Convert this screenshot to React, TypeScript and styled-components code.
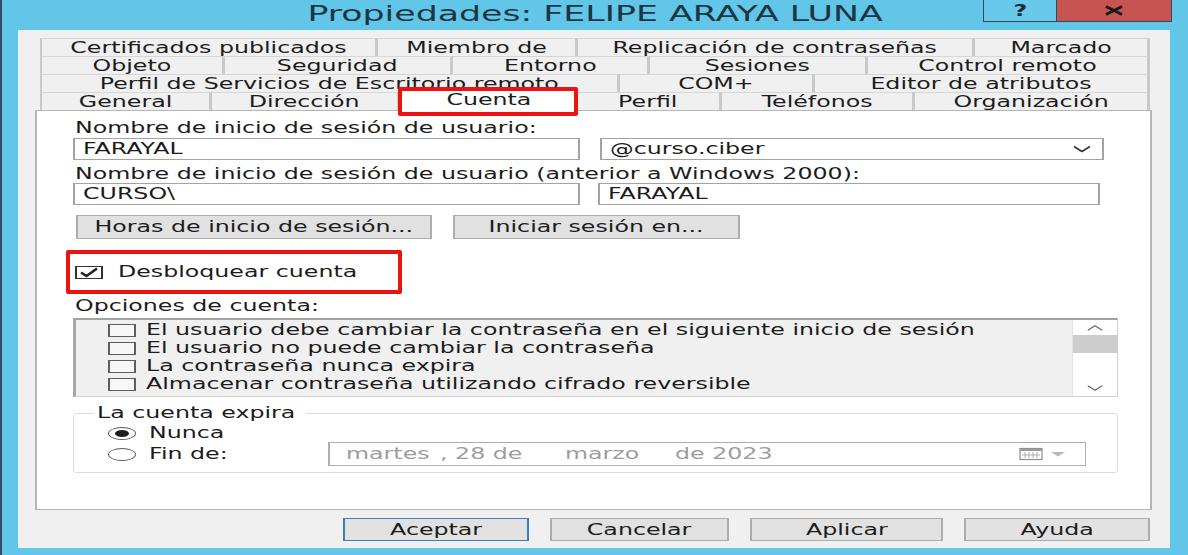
import React from 'react';
import styled, { createGlobalStyle, css } from 'styled-components';

const Global = createGlobalStyle`
  html, body { margin: 0; padding: 0; background: #62c6e9; }
  body {
    font-family: "DejaVu Sans", "Noto Sans", sans-serif;
    font-size: 15px;
    color: #1c1c1c;
  }
  * { box-sizing: border-box; }
`;

const Wide = styled.span<{ $origin?: 'left' | 'center' }>`
  display: inline-block;
  white-space: nowrap;
  transform: scaleX(1.58);
  transform-origin: ${(p) => (p.$origin === 'center' ? 'center' : 'left')} center;
`;

const Frame = styled.div`
  width: 1188px;
  height: 555px;
  background: #62c6e9;
  border-left: 2px solid #2f4d5b;
  display: flex;
  flex-direction: column;
  overflow: hidden;
`;

const TitleBar = styled.div`
  height: 30px;
  flex: none;
  display: grid;
  grid-template-columns: 1fr auto 1fr;
  align-items: start;
`;

const Title = styled.div`
  grid-column: 2;
  font-size: 22px;
  line-height: 28px;
  color: #1c3542;
`;

const Controls = styled.div`
  grid-column: 3;
  justify-self: end;
  display: flex;
  margin-right: 16px;
`;

const CtrlButton = styled.div<{ $close?: boolean }>`
  width: ${(p) => (p.$close ? 115 : 74)}px;
  height: 22px;
  background: ${(p) => (p.$close ? '#c75450' : '#68c9ea')};
  border: 1px solid #2e4a58;
  border-top: none;
  ${(p) => p.$close && 'border-left: none;'}
  display: flex;
  align-items: center;
  justify-content: center;
  font-weight: bold;
  font-size: 15px;
  color: #1b2b33;
`;

const Body = styled.div`
  flex: 1;
  margin: 0 18px 7px 16px;
  background: #f0f0f0;
  padding: 8px 18px 7px 17px;
  display: flex;
  flex-direction: column;
`;

const TabStrip = styled.div`
  display: flex;
  flex-direction: column;
  margin: 0 2px 0 5px;
  position: relative;
  z-index: 1;
`;

const TabRow = styled.div`
  display: flex;
  height: 18px;
  align-items: flex-start;
`;

const Tab = styled.div<{ $w: number; $active?: boolean }>`
  position: relative;
  width: ${(p) => p.$w}px;
  flex: none;
  height: 18px;
  background: #f0f0f0;
  border-top: 1px solid #d6d6d6;
  border-right: 3px solid #c9c9c9;
  &:first-child {
    border-left: 2px solid #c9c9c9;
  }
  display: flex;
  align-items: center;
  justify-content: center;
  line-height: 16px;
  ${(p) =>
    p.$active &&
    css`
      height: 23px;
      margin-top: -4px;
      background: #ffffff;
      border: 1px solid #d0d0d0;
      border-bottom: none;
      z-index: 3;
      &::after {
        content: '';
        position: absolute;
        left: -3px;
        right: -2px;
        top: -2px;
        bottom: -5px;
        border: 4px solid #ee1111;
        border-radius: 2px;
        pointer-events: none;
      }
    `}
`;

const Panel = styled.div`
  height: 400px;
  flex: none;
  background: #ffffff;
  border: 1px solid #b5b5b5;
  border-left-width: 2px;
  border-right-width: 2px;
  padding: 9px 32px 0 36px;
  display: flex;
  flex-direction: column;
`;

const Label = styled.div<{ $mt?: number }>`
  height: 16px;
  line-height: 16px;
  margin-top: ${(p) => p.$mt ?? 0}px;
  margin-left: 2px;
`;

const FieldRow = styled.div<{ $cols: string; $gap: number; $mt: number }>`
  display: grid;
  grid-template-columns: ${(p) => p.$cols};
  column-gap: ${(p) => p.$gap}px;
  margin-top: ${(p) => p.$mt}px;
`;

const TextBox = styled.div`
  height: 22px;
  background: #ffffff;
  border: 1px solid #a3a3a3;
  border-left-width: 2px;
  border-right-width: 2px;
  display: flex;
  align-items: center;
  justify-content: space-between;
  padding: 0 10px 0 8px;
  line-height: 16px;
`;

const ButtonRow = styled.div<{ $mt: number; $end?: boolean }>`
  display: flex;
  gap: 21px;
  margin-top: ${(p) => p.$mt}px;
  justify-content: ${(p) => (p.$end ? 'flex-end' : 'flex-start')};
  ${(p) => (p.$end ? 'margin-right: 2px;' : 'margin-left: 3px;')}
`;

const Button = styled.div<{ $w: number; $default?: boolean; $h?: number }>`
  width: ${(p) => p.$w}px;
  height: ${(p) => p.$h ?? 24}px;
  background: #e1e1e1;
  border: 1px solid ${(p) => (p.$default ? '#3c7fc1' : '#adadad')};
  border-left-width: 2px;
  border-right-width: 2px;
  display: flex;
  align-items: center;
  justify-content: center;
  line-height: 16px;
`;

const CheckRow = styled.div`
  width: 336px;
  height: 44px;
  margin: 11px 0 0 -7px;
  border: 4px solid #ee1111;
  border-radius: 2px;
  display: flex;
  align-items: center;
  gap: 15px;
  padding-left: 5px;
`;

const CheckBox = styled.div<{ $dark?: boolean }>`
  width: 28px;
  height: 13px;
  flex: none;
  background: ${(p) => (p.$dark ? '#ffffff' : '#f7f7f7')};
  border: 1px solid ${(p) => (p.$dark ? '#333333' : '#5e5e5e')};
  border-left-width: 2px;
  border-right-width: 2px;
  display: flex;
  align-items: center;
  justify-content: center;
`;

const ListBox = styled.div`
  height: 79px;
  margin-top: 4px;
  background: #f0f0f0;
  display: flex;
  border: 1px solid #d0d0d0;
  border-top: 2px solid #a2a2a2;
  border-left: 3px solid #a8a8a8;
`;

const Items = styled.div`
  flex: 1;
  padding: 1px 0 0 32px;
  display: flex;
  flex-direction: column;
`;

const Item = styled.div`
  height: 18px;
  display: flex;
  align-items: center;
  gap: 10px;
  line-height: 16px;
`;

const ScrollBar = styled.div`
  width: 45px;
  flex: none;
  background: #ffffff;
  border-left: 1px solid #e2e2e2;
  display: flex;
  flex-direction: column;
`;

const ScrollArrow = styled.div<{ $h: number }>`
  height: ${(p) => p.$h}px;
  display: flex;
  align-items: center;
  justify-content: center;
`;

const ScrollThumb = styled.div`
  height: 18px;
  background: #cdcdcd;
`;

const ScrollTrack = styled.div`
  flex: 1;
`;

const Group = styled.fieldset`
  margin: 8px 0 0 0;
  padding: 0 31px 6px 20px;
  border: 1px solid #dcdcdc;
  border-radius: 3px;
  min-width: 0;
`;

const Legend = styled.legend`
  width: 212px;
  padding: 0 3px;
  line-height: 16px;
  height: 16px;
`;

const RadioRow = styled.div<{ $h: number; $mt?: number }>`
  height: ${(p) => p.$h}px;
  margin: ${(p) => p.$mt ?? 0}px 0 0 14px;
  display: flex;
  align-items: center;
  line-height: 16px;
`;

const RadioLead = styled.div<{ $w?: number }>`
  display: flex;
  align-items: center;
  gap: 13px;
  ${(p) => (p.$w ? `width: ${p.$w}px; flex: none;` : '')}
`;

const Radio = styled.div<{ $on?: boolean }>`
  width: 28px;
  height: 13px;
  flex: none;
  border-radius: 50%;
  border: 1.5px solid #5a5a5a;
  background: #ffffff;
  display: flex;
  align-items: center;
  justify-content: center;
  &::after {
    content: '';
    display: ${(p) => (p.$on ? 'block' : 'none')};
    width: 14px;
    height: 7px;
    border-radius: 50%;
    background: #1e1e1e;
  }
`;

const DateBox = styled.div`
  width: 758px;
  height: 24px;
  background: #ffffff;
  border: 1px solid #adadad;
  border-left-width: 2px;
  display: flex;
  align-items: center;
  padding: 0 18px 0 16px;
  color: #9d9d9d;
  line-height: 16px;
`;

const DateSeg = styled.div<{ $w: number }>`
  width: ${(p) => p.$w}px;
  flex: none;
`;

const DateIcons = styled.div`
  margin-left: auto;
  display: flex;
  align-items: center;
  gap: 4px;
`;

const tabRows: { label: string; w: number; active?: boolean }[][] = [
  [
    { label: 'Certificados publicados', w: 338 },
    { label: 'Miembro de', w: 200 },
    { label: 'Replicación de contraseñas', w: 397 },
    { label: 'Marcado', w: 175 },
  ],
  [
    { label: 'Objeto', w: 185 },
    { label: 'Seguridad', w: 228 },
    { label: 'Entorno', w: 197 },
    { label: 'Sesiones', w: 218 },
    { label: 'Control remoto', w: 282 },
  ],
  [
    { label: 'Perfil de Servicios de Escritorio remoto', w: 580 },
    { label: 'COM+', w: 195 },
    { label: 'Editor de atributos', w: 335 },
  ],
  [
    { label: 'General', w: 172 },
    { label: 'Dirección', w: 188 },
    { label: 'Cuenta', w: 177, active: true },
    { label: 'Perfil', w: 145 },
    { label: 'Teléfonos', w: 193 },
    { label: 'Organización', w: 235 },
  ],
];

const options = [
  'El usuario debe cambiar la contraseña en el siguiente inicio de sesión',
  'El usuario no puede cambiar la contraseña',
  'La contraseña nunca expira',
  'Almacenar contraseña utilizando cifrado reversible',
];

const Chevron = ({ up, color = '#333', w = 20 }: { up?: boolean; color?: string; w?: number }) => (
  <svg width={w} height="8" viewBox="0 0 20 8">
    <path d={up ? 'M2 6.5 L10 1.5 L18 6.5' : 'M2 1.5 L10 6.5 L18 1.5'} fill="none" stroke={color} strokeWidth="1.5" />
  </svg>
);

const CheckMark = () => (
  <svg width="22" height="11" viewBox="0 0 22 11">
    <path d="M3 5.5 L8.5 9 L19 1.5" fill="none" stroke="#1e1e1e" strokeWidth="2.4" />
  </svg>
);

const CloseGlyph = () => (
  <svg width="24" height="11" viewBox="0 0 24 11">
    <path d="M4 1.5 L20 9.5 M20 1.5 L4 9.5" fill="none" stroke="#1b1b1b" strokeWidth="3" />
  </svg>
);

const CalendarGlyph = () => (
  <svg width="26" height="14" viewBox="0 0 26 14">
    <rect x="1" y="1.5" width="22" height="11" fill="#ffffff" stroke="#8c8c8c" strokeWidth="1.2" />
    <rect x="1" y="1.5" width="22" height="2.5" fill="#9a9a9a" />
    <path d="M6 5 V11 M10 5 V11 M14 5 V11 M18 5 V11 M3 8 H21" stroke="#b0b0b0" strokeWidth="1" />
  </svg>
);

const DropTriangle = () => (
  <svg width="18" height="8" viewBox="0 0 18 8">
    <polygon points="2,2 16,2 9,6.5" fill="#b8b8b8" />
  </svg>
);

export default function App() {
  return (
    <>
      <Global />
      <Frame>
        <TitleBar>
          <Title>
            <Wide $origin="center">Propiedades: FELIPE ARAYA LUNA</Wide>
          </Title>
          <Controls>
            <CtrlButton>
              <Wide $origin="center">?</Wide>
            </CtrlButton>
            <CtrlButton $close>
              <CloseGlyph />
            </CtrlButton>
          </Controls>
        </TitleBar>

        <Body>
          <TabStrip>
            {tabRows.map((row, i) => (
              <TabRow key={i}>
                {row.map((t) => (
                  <Tab key={t.label} $w={t.w} $active={t.active}>
                    <Wide $origin="center">{t.label}</Wide>
                  </Tab>
                ))}
              </TabRow>
            ))}
          </TabStrip>

          <Panel>
            <Label>
              <Wide>Nombre de inicio de sesión de usuario:</Wide>
            </Label>
            <FieldRow $cols="507px 504px" $gap={20} $mt={2}>
              <TextBox>
                <Wide>FARAYAL</Wide>
              </TextBox>
              <TextBox>
                <Wide>@curso.ciber</Wide>
                <Chevron />
              </TextBox>
            </FieldRow>

            <Label $mt={6}>
              <Wide>Nombre de inicio de sesión de usuario (anterior a Windows 2000):</Wide>
            </Label>
            <FieldRow $cols="507px 502px" $gap={18} $mt={1}>
              <TextBox>
                <Wide>CURSO\</Wide>
              </TextBox>
              <TextBox>
                <Wide>FARAYAL</Wide>
              </TextBox>
            </FieldRow>

            <ButtonRow $mt={10}>
              <Button $w={356}>
                <Wide $origin="center">Horas de inicio de sesión...</Wide>
              </Button>
              <Button $w={287}>
                <Wide $origin="center">Iniciar sesión en...</Wide>
              </Button>
            </ButtonRow>

            <CheckRow>
              <CheckBox $dark>
                <CheckMark />
              </CheckBox>
              <Wide>Desbloquear cuenta</Wide>
            </CheckRow>

            <Label $mt={4}>
              <Wide>Opciones de cuenta:</Wide>
            </Label>
            <ListBox>
              <Items>
                {options.map((o) => (
                  <Item key={o}>
                    <CheckBox />
                    <Wide>{o}</Wide>
                  </Item>
                ))}
              </Items>
              <ScrollBar>
                <ScrollArrow $h={15}>
                  <Chevron up color="#6a6a6a" w={18} />
                </ScrollArrow>
                <ScrollThumb />
                <ScrollTrack />
                <ScrollArrow $h={17}>
                  <Chevron color="#6a6a6a" w={18} />
                </ScrollArrow>
              </ScrollBar>
            </ListBox>

            <Group>
              <Legend>
                <Wide>La cuenta expira</Wide>
              </Legend>
              <RadioRow $h={18} $mt={3}>
                <RadioLead>
                  <Radio $on />
                  <Wide>Nunca</Wide>
                </RadioLead>
              </RadioRow>
              <RadioRow $h={24}>
                <RadioLead $w={220}>
                  <Radio />
                  <Wide>Fin de:</Wide>
                </RadioLead>
                <DateBox>
                  <DateSeg $w={94}>
                    <Wide>martes</Wide>
                  </DateSeg>
                  <DateSeg $w={125}>
                    <Wide>, 28 de</Wide>
                  </DateSeg>
                  <DateSeg $w={110}>
                    <Wide>marzo</Wide>
                  </DateSeg>
                  <DateSeg $w={120}>
                    <Wide>de 2023</Wide>
                  </DateSeg>
                  <DateIcons>
                    <CalendarGlyph />
                    <DropTriangle />
                  </DateIcons>
                </DateBox>
              </RadioRow>
            </Group>
          </Panel>

          <ButtonRow $mt={8} $end>
            <Button $w={186} $h={23} $default>
              <Wide $origin="center">Aceptar</Wide>
            </Button>
            <Button $w={179} $h={23}>
              <Wide $origin="center">Cancelar</Wide>
            </Button>
            <Button $w={193} $h={23}>
              <Wide $origin="center">Aplicar</Wide>
            </Button>
            <Button $w={186} $h={23}>
              <Wide $origin="center">Ayuda</Wide>
            </Button>
          </ButtonRow>
        </Body>
      </Frame>
    </>
  );
}
